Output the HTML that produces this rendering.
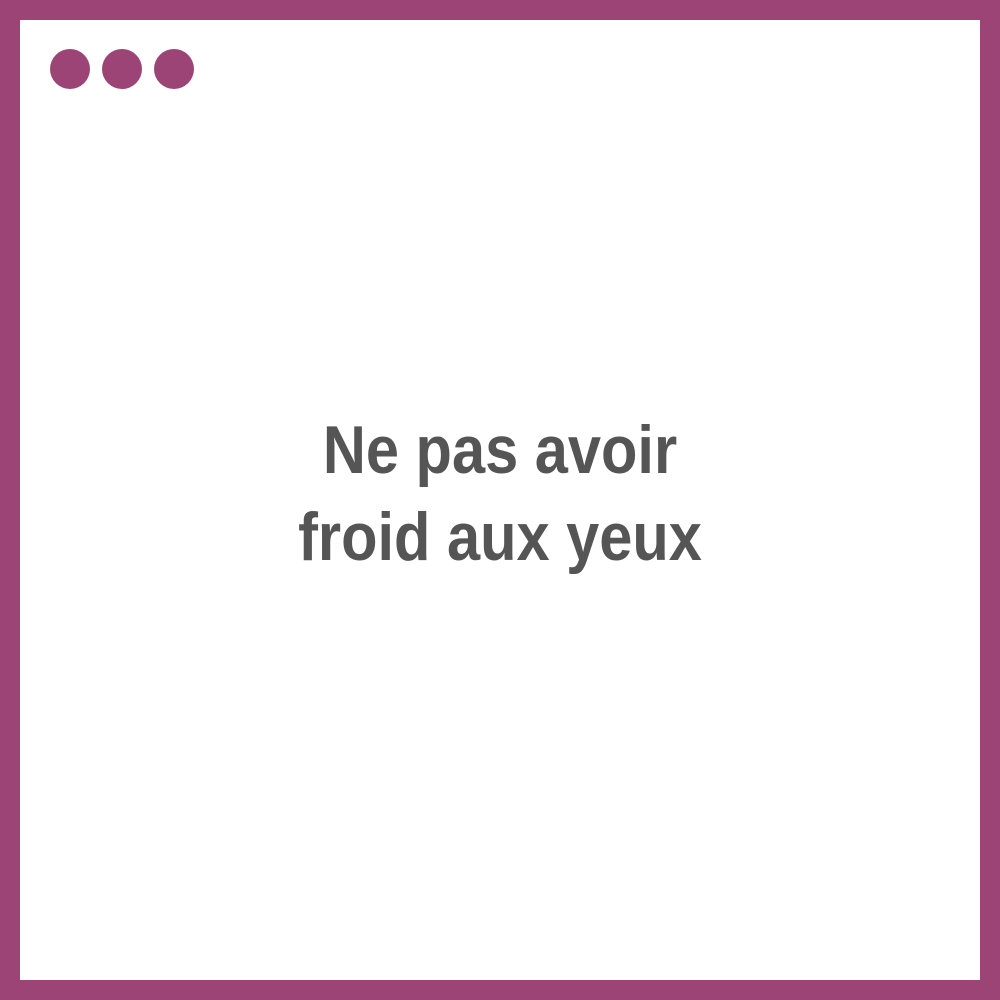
<!DOCTYPE html>
<html><head><meta charset="utf-8"><style>
html,body{margin:0;padding:0}
body{width:1000px;height:1000px;position:relative;background:#9b4475;overflow:hidden}
.inner{position:absolute;left:20px;top:20px;width:960px;height:960px;background:#fff}
.dot{position:absolute;top:49px;width:40px;height:40px;border-radius:50%;background:#9b4475}
.t{position:absolute;left:0;width:1000px;top:407px;text-align:center;font-family:"Liberation Sans",sans-serif;font-weight:bold;font-size:68px;line-height:87px;color:#555}
.t div{transform:scaleX(0.876);transform-origin:center}
</style></head><body>
<div class="inner"></div>
<div class="dot" style="left:50px"></div>
<div class="dot" style="left:102px"></div>
<div class="dot" style="left:154px"></div>
<div class="t"><div>Ne pas avoir</div><div>froid aux yeux</div></div>
</body></html>
